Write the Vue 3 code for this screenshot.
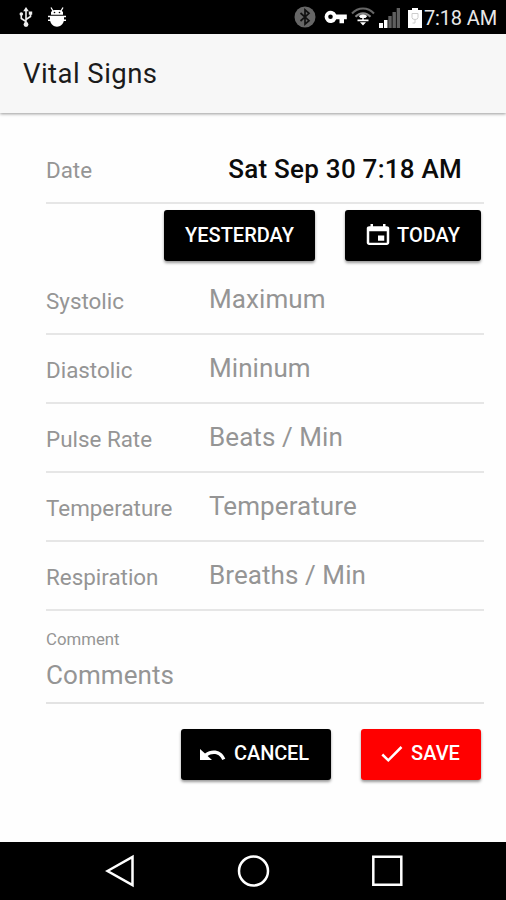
<script setup>
import { ref } from 'vue'

const fields = ref([
  { label: 'Systolic', placeholder: 'Maximum' },
  { label: 'Diastolic', placeholder: 'Mininum' },
  { label: 'Pulse Rate', placeholder: 'Beats / Min' },
  { label: 'Temperature', placeholder: 'Temperature' },
  { label: 'Respiration', placeholder: 'Breaths / Min' },
])
</script>

<template>
  <div class="screen">
    <div class="status">
      <svg class="usb" width="14" height="20" viewBox="0 0 14 20" fill="none" stroke="#eee" stroke-width="1.6">
        <path d="M7 3v14M7 14.5 2.300 11.500V7.500M7 12.500l4.500-3V6" />
        <path d="M7 0l2.800 4.300H4.200z" fill="#eee" stroke="none" />
        <circle cx="7" cy="17.500" r="2.400" fill="#eee" stroke="none" />
        <circle cx="2.300" cy="7" r="1.800" fill="#eee" stroke="none" />
        <path d="M9.800 4.500h3.400v3.200H9.800z" fill="#eee" stroke="none" />
      </svg>
      <svg class="bug" width="20" height="20" viewBox="0 0 20 20">
        <path d="M4 .5 6 4M16 .5 14 4" stroke="#fff" stroke-width="1.300" />
        <path d="M4 7.800V5.200C5 3.200 7 3 10 3s5 .2 6 2.200v2.600zM1 8.700h18v1.500H1zM3 10.900h14v1H3zM1 12.500h18V14h-2.200c-.8 3.400-3.300 5.700-6.800 5.700S4 17.400 3.200 14H1z" fill="#fff" />
        <path d="M3 10h14v3H3z" fill="#fff" />
        <circle cx="7.500" cy="5.500" r=".8" /><circle cx="12.500" cy="5.500" r=".8" />
      </svg>
      <span class="spacer"></span>
      <svg width="22" height="22" viewBox="0 0 22 22">
        <circle cx="11" cy="11" r="10.500" fill="#666" />
        <path d="M6.500 7l8.500 7.700-4 3.500V3.800l4 3.500L6.500 15" fill="none" stroke="#111" stroke-width="1.700" />
      </svg>
      <svg class="key" width="23" height="14" viewBox="0 0 23 14">
        <path fill="#fff" fill-rule="evenodd" d="M12.300 4.500A6.100 6.100 0 1 0 12.300 9.200H15.500V13.200H20V9.200H22.800V4.500ZM6.500 4.500a2.300 2.300 0 1 1 0 4.600 2.300 2.300 0 0 1 0-4.600z" />
      </svg>
      <svg class="wifi" width="24" height="20" viewBox="0 0 24 20" fill="none">
        <path d="M1 6.500c6-6.700 16-6.700 22 0" stroke="#666" stroke-width="2" />
        <path d="M4.500 9.700c4.300-4.700 10.700-4.700 15 0" stroke="#888" stroke-width="2" />
        <path d="M7.700 9q4.300-3.500 8.600 0L14.500 11h-5z" fill="#fff" />
        <path d="M12 8v5" stroke="#fff" stroke-width="1.500" />
        <path d="M6.500 12.500h11v1.700h-11zM9 15.200h6L12 18.500z" fill="#fff" />
      </svg>
      <svg class="signal" width="22" height="20" viewBox="0 0 22 20">
        <path d="M0 15h4v5H0zM5 12h3.500v8H5z" fill="#fff" />
        <path d="M9.300 8h3.400v12H9.300zM13.500 4h3.400v16h-3.400zM17.700 0H21v20h-3.300z" fill="#606060" />
      </svg>
      <svg class="battery" width="14" height="20" viewBox="0 0 14 20">
        <path d="M4 0h6v2h4v18H0V2h4z" fill="#fff" />
        <path d="M4 5.500h6v4q0 2-3 2t-3-2zM7 11.500V15H4.500" fill="none" stroke="#ccc" />
      </svg>
      <span class="clock">7:18 AM</span>
    </div>

    <header class="toolbar"><h1>Vital Signs</h1></header>

    <main>
      <div class="row date-row">
        <span class="label">Date</span>
        <span class="date">Sat Sep 30 7:18 AM</span>
      </div>
      <div class="buttons top-buttons">
        <button class="yesterday"><span>YESTERDAY</span></button>
        <button class="today">
          <svg width="30" height="25" viewBox="0 0 24 24" preserveAspectRatio="none" fill="#fff">
            <path d="M17 12h-5v5h5v-5zM16 1v2H8V1H6v2H5c-1.110 0-1.990.9-1.990 2L3 19c0 1.100.89 2 2 2h14c1.100 0 2-.9 2-2V5c0-1.100-.9-2-2-2h-1V1h-2zm3 18H5V8h14v11z" />
          </svg>
          <span>TODAY</span>
        </button>
      </div>
      <div v-for="field in fields" :key="field.label" class="row">
        <span class="label">{{ field.label }}</span>
        <span class="placeholder">{{ field.placeholder }}</span>
      </div>
      <div class="comment">
        <span class="comment-label">Comment</span>
        <span class="placeholder">Comments</span>
      </div>
      <div class="buttons bottom-buttons">
        <button class="cancel">
          <svg width="26" height="13" viewBox="0 0 26 14" preserveAspectRatio="none">
            <path fill="#fff" d="M0 1v12h12L7.600 8.600C11 5.500 19.500 4.700 22.200 12.800L25.300 11.500C21.500 1.500 11.500.5 5 6z" />
          </svg>
          <span>CANCEL</span>
        </button>
        <button class="save">
          <svg width="22" height="18" viewBox="0 0 22 18" fill="none" stroke="#fff" stroke-width="2.500">
            <path d="M1.300 9.500 7.300 15.300 20.500 2" />
          </svg>
          <span>SAVE</span>
        </button>
      </div>
    </main>

    <nav>
      <svg width="30" height="34" viewBox="0 0 30 34"><path d="M2.500 17 27.500 3v28z" /></svg>
      <svg width="34" height="34" viewBox="0 0 34 34"><circle cx="17.500" cy="17" r="14.500" /></svg>
      <svg width="34" height="34" viewBox="0 0 34 34"><path d="M3.300 2.800h28v28h-28z" /></svg>
    </nav>
  </div>
</template>

<style>
body { margin: 0; }
</style>

<style scoped>
.screen {
  width: 506px;
  height: 900px;
  display: flex;
  flex-direction: column;
  overflow: hidden;
  background: #fefefe;
  font-family: Roboto, sans-serif;
}
svg { display: block; flex: none; }
.status {
  height: 34px;
  flex: none;
  box-sizing: border-box;
  padding: 0 9px 0 19px;
  display: flex;
  align-items: center;
  background: #000;
  color: #e8e8e8;
}
.bug { margin-left: 14px; }
.spacer { flex: 1; }
.key { margin-left: 8px; }
.wifi { margin-left: 4px; }
.signal { margin-left: 4px; margin-top: 2px; }
.battery { margin-left: 7px; margin-top: 1px; }
.clock { width: 73px; margin-left: 2px; padding-top: 1px; font-size: 20px; line-height: 24px; letter-spacing: -.15px; white-space: nowrap; }
.toolbar {
  height: 79px;
  flex: none;
  display: flex;
  align-items: center;
  padding-left: 23px;
  background: #f7f7f7;
  box-shadow: 0 1px 3px rgba(0, 0, 0, .4);
  z-index: 1;
}
h1 { margin: 0; font-size: 27.500px; font-weight: 400; letter-spacing: .45px; color: #1b1b1b; }
main { flex: 1; padding: 22px 22px 0 46px; }
.row {
  height: 69px;
  box-sizing: border-box;
  display: flex;
  align-items: center;
  border-bottom: 2px solid #e6e6e6;
}
.label { width: 163px; padding-top: 2px; font-size: 22.400px; line-height: 26px; color: #959595; }
.placeholder { font-size: 26px; color: #959595; letter-spacing: .08px; }
.row .placeholder { padding-bottom: 1px; }
.date { flex: 1; padding-right: 22px; text-align: right; font-size: 26px; font-weight: 500; letter-spacing: .25px; color: #0b0b0b; white-space: nowrap; }
.buttons { display: flex; justify-content: flex-end; gap: 30px; padding-right: 3px; }
.top-buttons { padding-top: 6px; padding-bottom: 5px; }
.bottom-buttons { padding-top: 25px; }
button {
  height: 51px;
  box-sizing: border-box;
  border: 0;
  padding: 0 0 2px;
  display: flex;
  align-items: center;
  justify-content: center;
  border-radius: 3px;
  background: #000;
  color: #fff;
  font: 500 20px Roboto, sans-serif;
  box-shadow: 0 2px 3px rgba(0, 0, 0, .4);
}
.yesterday { width: 151px; }
.today { width: 136px; gap: 4px; padding-right: 3px; }
.today svg { margin-top: 2px; }
.cancel { width: 150px; gap: 8px; padding-right: 3px; letter-spacing: -.15px; }
.cancel svg { margin-top: 2px; }
.save { width: 120px; gap: 8px; padding-right: 1px; background: #f00; }
.save svg { margin-top: 2px; }
.bottom-buttons button { padding-bottom: 3px; }
.comment {
  height: 93px;
  box-sizing: border-box;
  padding-top: 17px;
  display: flex;
  flex-direction: column;
  border-bottom: 2px solid #e3e3e3;
}
.comment-label { font-size: 16.800px; line-height: 22px; color: #959595; }
.comment .placeholder { line-height: 32px; margin-top: 9px; }
nav {
  height: 58px;
  flex: none;
  box-sizing: border-box;
  padding: 0 102px 0 105px;
  display: flex;
  align-items: center;
  justify-content: space-between;
  background: #000;
}
nav path, nav circle { fill: none; stroke: #fff; stroke-width: 2.500; }
</style>
